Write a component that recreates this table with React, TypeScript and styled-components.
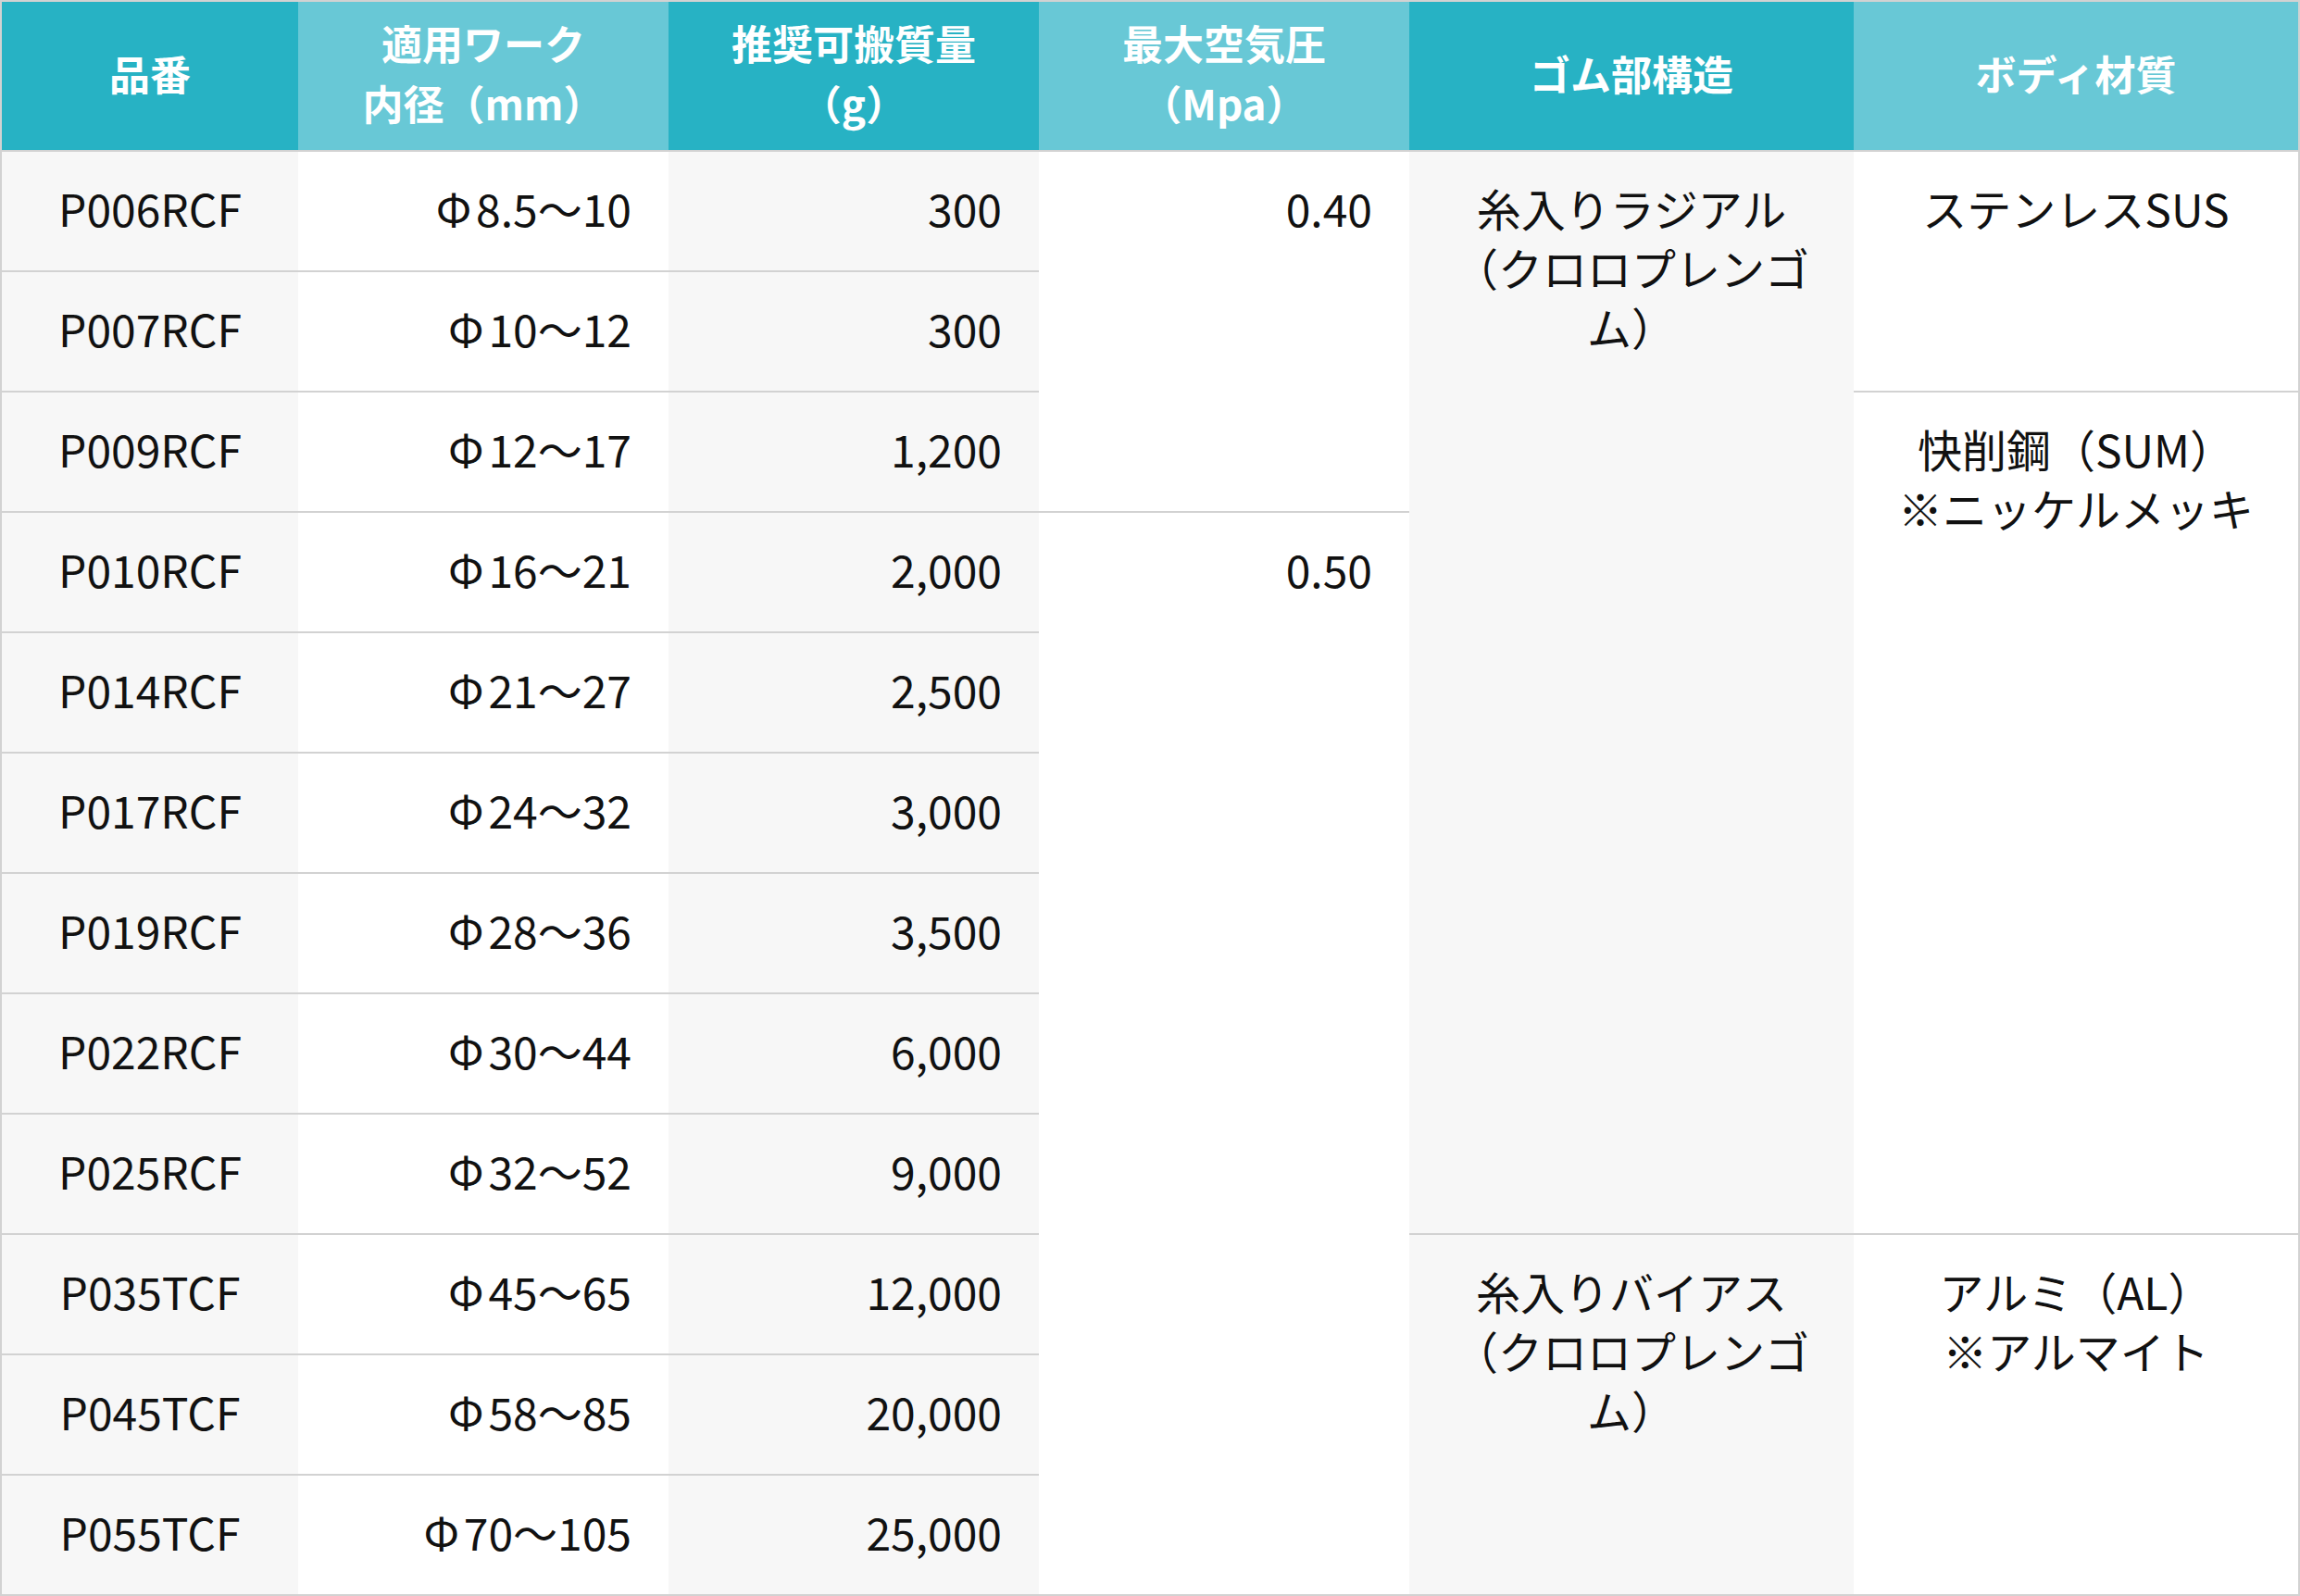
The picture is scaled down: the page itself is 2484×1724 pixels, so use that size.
import React from "react";
import styled, { createGlobalStyle } from "styled-components";

const GlobalStyle = createGlobalStyle`
  html, body {
    margin: 0;
    padding: 0;
    background: #fff;
  }
`;

const Table = styled.table`
  border-collapse: collapse;
  table-layout: fixed;
  width: 2484px;
  border: 2px solid #d2d2d2;
  font-family: "Noto Sans CJK JP", "Noto Sans", sans-serif;
`;

const HeadCell = styled.th<{ $light?: boolean }>`
  background: ${p => (p.$light ? "#68c8d6" : "#27b2c4")};
  color: #fff;
  font-weight: 700;
  font-size: 44px;
  line-height: 65px;
  padding: 12px 10px 18px;
  text-align: center;
  vertical-align: middle;
  border-bottom: 2px solid #d2d2d2;
`;

const Cell = styled.td<{ $shade?: boolean; $align?: "left" | "center" | "right" }>`
  background: ${p => (p.$shade ? "#f7f7f7" : "#fff")};
  color: #111;
  font-size: 48px;
  font-weight: 400;
  line-height: 64px;
  padding: 28px 40px 36px;
  text-align: ${p => p.$align || "center"};
  vertical-align: top;
  border-top: 2px solid #d2d2d2;
  border-bottom: 2px solid #d2d2d2;
  white-space: nowrap;
`;

const Phi = styled.span`
  margin-right: 0.1em;
`;

type Span = { lines: string[]; rows: number };

const items = [
  { code: "P006RCF", range: "8.5～10", load: "300" },
  { code: "P007RCF", range: "10～12", load: "300" },
  { code: "P009RCF", range: "12～17", load: "1,200" },
  { code: "P010RCF", range: "16～21", load: "2,000" },
  { code: "P014RCF", range: "21～27", load: "2,500" },
  { code: "P017RCF", range: "24～32", load: "3,000" },
  { code: "P019RCF", range: "28～36", load: "3,500" },
  { code: "P022RCF", range: "30～44", load: "6,000" },
  { code: "P025RCF", range: "32～52", load: "9,000" },
  { code: "P035TCF", range: "45～65", load: "12,000" },
  { code: "P045TCF", range: "58～85", load: "20,000" },
  { code: "P055TCF", range: "70～105", load: "25,000" },
];

const pressure: Record<number, Span> = {
  0: { lines: ["0.40"], rows: 3 },
  3: { lines: ["0.50"], rows: 9 },
};

const rubber: Record<number, Span> = {
  0: { lines: ["糸入りラジアル", "（クロロプレンゴ", "ム）"], rows: 9 },
  9: { lines: ["糸入りバイアス", "（クロロプレンゴ", "ム）"], rows: 3 },
};

const body: Record<number, Span> = {
  0: { lines: ["ステンレスSUS"], rows: 2 },
  2: { lines: ["快削鋼（SUM）", "※ニッケルメッキ"], rows: 7 },
  9: { lines: ["アルミ（AL）", "※アルマイト"], rows: 3 },
};

const Lines = ({ lines }: { lines: string[] }) => (
  <>
    {lines.map((l, i) => (
      <React.Fragment key={i}>
        {i > 0 && <br />}
        {l}
      </React.Fragment>
    ))}
  </>
);

const App: React.FC = () => {
  return (
    <>
      <GlobalStyle />
      <Table>
        <colgroup>
          <col style={{ width: 321 }} />
          <col style={{ width: 400 }} />
          <col style={{ width: 400 }} />
          <col style={{ width: 400 }} />
          <col style={{ width: 480 }} />
          <col style={{ width: 481 }} />
        </colgroup>
        <thead>
          <tr>
            <HeadCell>品番</HeadCell>
            <HeadCell $light>適用ワーク<br />内径（mm）</HeadCell>
            <HeadCell>推奨可搬質量<br />（g）</HeadCell>
            <HeadCell $light>最大空気圧<br />（Mpa）</HeadCell>
            <HeadCell>ゴム部構造</HeadCell>
            <HeadCell $light>ボディ材質</HeadCell>
          </tr>
        </thead>
        <tbody>
          {items.map((it, i) => (
            <tr key={it.code}>
              <Cell $shade>{it.code}</Cell>
              <Cell $align="right">
                <Phi>Φ</Phi>
                {it.range}
              </Cell>
              <Cell $shade $align="right">{it.load}</Cell>
              {pressure[i] && (
                <Cell rowSpan={pressure[i].rows} $align="right">
                  <Lines lines={pressure[i].lines} />
                </Cell>
              )}
              {rubber[i] && (
                <Cell rowSpan={rubber[i].rows} $shade>
                  <Lines lines={rubber[i].lines} />
                </Cell>
              )}
              {body[i] && (
                <Cell rowSpan={body[i].rows}>
                  <Lines lines={body[i].lines} />
                </Cell>
              )}
            </tr>
          ))}
        </tbody>
      </Table>
    </>
  );
};

export default App;
